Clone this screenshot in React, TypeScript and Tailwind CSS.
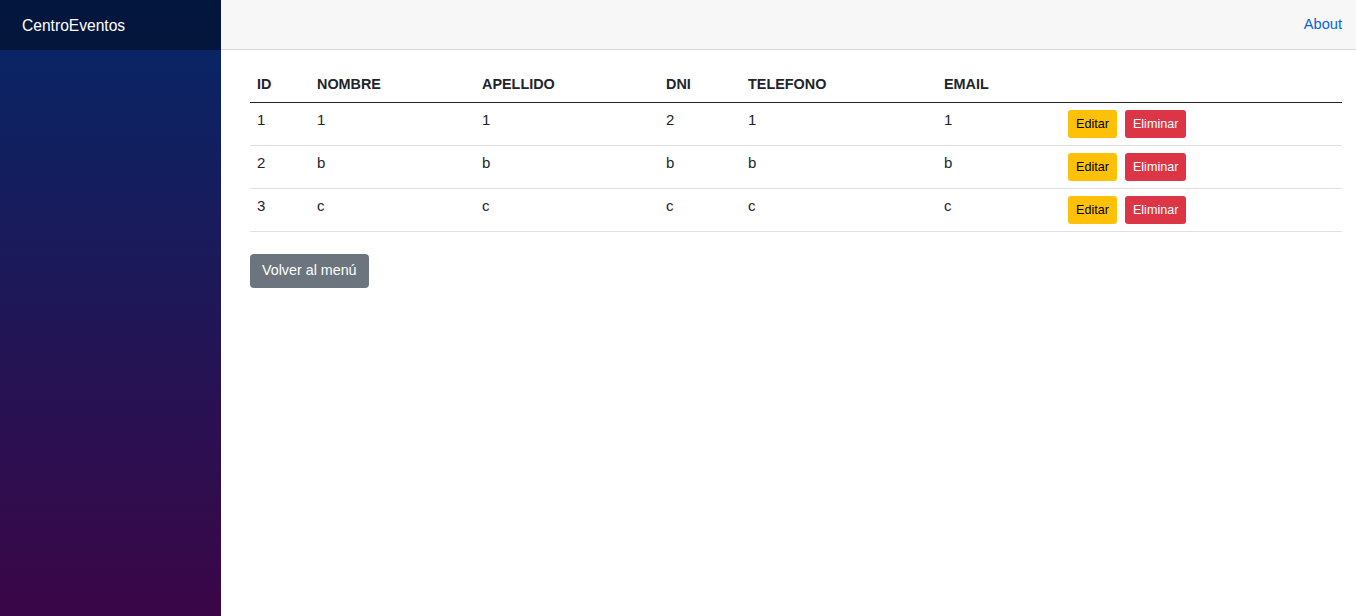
import React from "react";

const rows = [
  { id: 1, nombre: "1", apellido: "1", dni: "2", telefono: "1", email: "1" },
  { id: 2, nombre: "b", apellido: "b", dni: "b", telefono: "b", email: "b" },
  { id: 3, nombre: "c", apellido: "c", dni: "c", telefono: "c", email: "c" },
];

export default function App() {
  return (
    <div
      className="flex h-[616px] w-full text-[#212529]"
      style={{ fontFamily: '"Liberation Sans", Arial, sans-serif' }}
    >
      <aside className="w-[221px] shrink-0 bg-[linear-gradient(180deg,#052767_0%,#3a0647_100%)]">
        <div className="flex h-[50px] items-center bg-black/40 pl-[22px] pt-[2px] text-[15.6px] text-white">
          CentroEventos
        </div>
      </aside>

      <main className="flex-1 bg-white">
        <div className="flex h-[50px] items-center justify-end border-b border-[#d6d5d5] bg-[#f7f7f7] pr-[14px]">
          <a href="#" className="text-[14.6px] text-[#0366d6]">
            About
          </a>
        </div>

        <div className="pl-[29px] pr-[14px] pt-[12px]">
          <table className="w-full table-fixed border-collapse text-left leading-6">
            <colgroup>
              <col className="w-[60px]" />
              <col className="w-[165px]" />
              <col className="w-[184px]" />
              <col className="w-[82px]" />
              <col className="w-[196px]" />
              <col className="w-[124px]" />
              <col />
            </colgroup>
            <thead className="text-[14.4px]">
              <tr className="border-b border-[#212529]">
                <th className="px-[7px] pt-[10px] pb-[6px] font-bold">ID</th>
                <th className="px-[7px] pt-[10px] pb-[6px] font-bold">NOMBRE</th>
                <th className="px-[7px] pt-[10px] pb-[6px] font-bold">APELLIDO</th>
                <th className="px-[7px] pt-[10px] pb-[6px] font-bold">DNI</th>
                <th className="px-[7px] pt-[10px] pb-[6px] font-bold">TELEFONO</th>
                <th className="px-[7px] pt-[10px] pb-[6px] font-bold">EMAIL</th>
                <th className="px-[7px] pt-[10px] pb-[6px]"></th>
              </tr>
            </thead>
            <tbody className="text-[15px]">
              {rows.map((r) => (
                <tr key={r.id} className="border-b border-[#dee2e6]">
                  <td className="px-[7px] pt-[5px] pb-[9px] align-top">{r.id}</td>
                  <td className="px-[7px] pt-[5px] pb-[9px] align-top">{r.nombre}</td>
                  <td className="px-[7px] pt-[5px] pb-[9px] align-top">{r.apellido}</td>
                  <td className="px-[7px] pt-[5px] pb-[9px] align-top">{r.dni}</td>
                  <td className="px-[7px] pt-[5px] pb-[9px] align-top">{r.telefono}</td>
                  <td className="px-[7px] pt-[5px] pb-[9px] align-top">{r.email}</td>
                  <td className="px-[7px] py-[7px] align-top">
                    <div className="flex gap-2">
                      <button className="h-[28px] rounded-[3px] bg-[#ffc107] px-2 text-[12.6px] text-black">
                        Editar
                      </button>
                      <button className="h-[28px] rounded-[3px] bg-[#dc3545] px-2 text-[12.6px] text-white">
                        Eliminar
                      </button>
                    </div>
                  </td>
                </tr>
              ))}
            </tbody>
          </table>

          <button className="mt-[22px] h-[34px] rounded-[4px] bg-[#6c757d] px-3 text-[14.3px] text-white">
            Volver al menú
          </button>
        </div>
      </main>
    </div>
  );
}
